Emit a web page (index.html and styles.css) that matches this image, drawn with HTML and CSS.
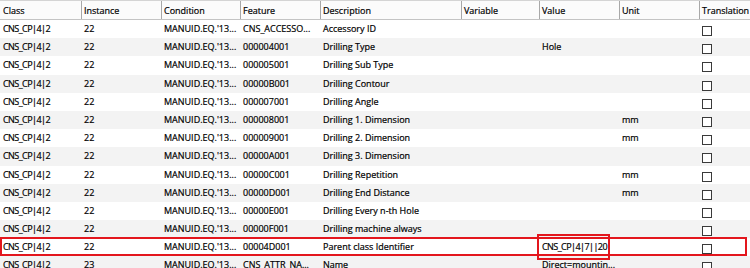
FILE: index.html
```html
<!DOCTYPE html>
<html>
<head>
<meta charset="utf-8">
<link rel="stylesheet" href="styles.css">
</head>
<body>
<div class="grid">
  <div class="row head">
    <div class="cell">Class</div>
    <div class="cell">Instance</div>
    <div class="cell">Condition</div>
    <div class="cell">Feature</div>
    <div class="cell">Description</div>
    <div class="cell">Variable</div>
    <div class="cell">Value</div>
    <div class="cell">Unit</div>
    <div class="cell">Translation</div>
  </div>
  <div class="row">
    <div class="cell code">CNS_CP|4|2</div><div class="cell">22</div><div class="cell">MANUID.EQ.'13...</div><div class="cell">CNS_ACCESSO...</div><div class="cell">Accessory ID</div><div class="cell"></div><div class="cell"></div><div class="cell"></div><div class="cell"><span class="check"></span></div>
  </div>
  <div class="row alt">
    <div class="cell code">CNS_CP|4|2</div><div class="cell">22</div><div class="cell">MANUID.EQ.'13...</div><div class="cell">000004001</div><div class="cell">Drilling Type</div><div class="cell"></div><div class="cell">Hole</div><div class="cell"></div><div class="cell"><span class="check"></span></div>
  </div>
  <div class="row">
    <div class="cell code">CNS_CP|4|2</div><div class="cell">22</div><div class="cell">MANUID.EQ.'13...</div><div class="cell">000005001</div><div class="cell">Drilling Sub Type</div><div class="cell"></div><div class="cell"></div><div class="cell"></div><div class="cell"><span class="check"></span></div>
  </div>
  <div class="row alt">
    <div class="cell code">CNS_CP|4|2</div><div class="cell">22</div><div class="cell">MANUID.EQ.'13...</div><div class="cell">00000B001</div><div class="cell">Drilling Contour</div><div class="cell"></div><div class="cell"></div><div class="cell"></div><div class="cell"><span class="check"></span></div>
  </div>
  <div class="row">
    <div class="cell code">CNS_CP|4|2</div><div class="cell">22</div><div class="cell">MANUID.EQ.'13...</div><div class="cell">000007001</div><div class="cell">Drilling Angle</div><div class="cell"></div><div class="cell"></div><div class="cell"></div><div class="cell"><span class="check"></span></div>
  </div>
  <div class="row alt">
    <div class="cell code">CNS_CP|4|2</div><div class="cell">22</div><div class="cell">MANUID.EQ.'13...</div><div class="cell">000008001</div><div class="cell">Drilling 1. Dimension</div><div class="cell"></div><div class="cell"></div><div class="cell">mm</div><div class="cell"><span class="check"></span></div>
  </div>
  <div class="row">
    <div class="cell code">CNS_CP|4|2</div><div class="cell">22</div><div class="cell">MANUID.EQ.'13...</div><div class="cell">000009001</div><div class="cell">Drilling 2. Dimension</div><div class="cell"></div><div class="cell"></div><div class="cell">mm</div><div class="cell"><span class="check"></span></div>
  </div>
  <div class="row alt">
    <div class="cell code">CNS_CP|4|2</div><div class="cell">22</div><div class="cell">MANUID.EQ.'13...</div><div class="cell">00000A001</div><div class="cell">Drilling 3. Dimension</div><div class="cell"></div><div class="cell"></div><div class="cell"></div><div class="cell"><span class="check"></span></div>
  </div>
  <div class="row">
    <div class="cell code">CNS_CP|4|2</div><div class="cell">22</div><div class="cell">MANUID.EQ.'13...</div><div class="cell">00000C001</div><div class="cell">Drilling Repetition</div><div class="cell"></div><div class="cell"></div><div class="cell">mm</div><div class="cell"><span class="check"></span></div>
  </div>
  <div class="row alt">
    <div class="cell code">CNS_CP|4|2</div><div class="cell">22</div><div class="cell">MANUID.EQ.'13...</div><div class="cell">00000D001</div><div class="cell">Drilling End Distance</div><div class="cell"></div><div class="cell"></div><div class="cell">mm</div><div class="cell"><span class="check"></span></div>
  </div>
  <div class="row">
    <div class="cell code">CNS_CP|4|2</div><div class="cell">22</div><div class="cell">MANUID.EQ.'13...</div><div class="cell">00000E001</div><div class="cell">Drilling Every n-th Hole</div><div class="cell"></div><div class="cell"></div><div class="cell"></div><div class="cell"><span class="check"></span></div>
  </div>
  <div class="row alt">
    <div class="cell code">CNS_CP|4|2</div><div class="cell">22</div><div class="cell">MANUID.EQ.'13...</div><div class="cell">00000F001</div><div class="cell">Drilling machine always</div><div class="cell"></div><div class="cell"></div><div class="cell"></div><div class="cell"><span class="check"></span></div>
  </div>
  <div class="row marked">
    <div class="cell code">CNS_CP|4|2</div><div class="cell">22</div><div class="cell">MANUID.EQ.'13...</div><div class="cell">00004D001</div><div class="cell">Parent class Identifier</div><div class="cell"></div><div class="cell code boxed">CNS_CP|4|7||20</div><div class="cell"></div><div class="cell"><span class="check"></span></div>
  </div>
  <div class="row alt">
    <div class="cell code">CNS_CP|4|2</div><div class="cell">23</div><div class="cell">MANUID.EQ.'13...</div><div class="cell">CNS_ATTR_NA...</div><div class="cell">Name</div><div class="cell"></div><div class="cell">Direct=mountin...</div><div class="cell"></div><div class="cell"><span class="check"></span></div>
  </div>
</div>
</body>
</html>
```

FILE: styles.css
```css
html, body {
  margin: 0;
  padding: 0;
  background: #ffffff;
  overflow: hidden;
}

.grid {
  width: 750px;
  font-family: "Open Sans", "Noto Sans", sans-serif;
  font-size: 9px;
  color: #000;
  -webkit-text-stroke: 0.2px #000;
}

.row {
  display: grid;
  grid-template-columns: 82px 80px 79px 80px 141px 78px 80px 80px 1fr;
  height: 18.2px;
  line-height: 18.2px;
  background: #ffffff;
}

.row.alt {
  background: #f3f3f3;
}

.cell {
  padding-left: 2px;
  white-space: nowrap;
  overflow: hidden;
}

.cell:first-child {
  padding-left: 3px;
}

.code {
  letter-spacing: -0.55px;
}

.head {
  height: 20px;
  line-height: 19px;
  background: #fbfbfb;
  border-top: 1px solid #d4d4d4;
  border-bottom: 1px solid #c4c4c4;
  box-sizing: border-box;
}

.head .cell {
  border-right: 1px solid #a8a8a8;
}

.head .cell:last-child {
  border-right: none;
}

.check {
  display: block;
  width: 8px;
  height: 8px;
  margin-top: 6px;
  border: 1px solid #3a3a3a;
  background: #fff;
}

.marked {
  position: relative;
}

.marked::after {
  content: "";
  position: absolute;
  left: 0;
  right: 3px;
  top: -1px;
  bottom: 0;
  border: 2px solid #e3161d;
  pointer-events: none;
}

.boxed {
  position: relative;
  overflow: visible;
}

.boxed::after {
  content: "";
  position: absolute;
  left: -3px;
  width: 73px;
  top: -4px;
  height: 26px;
  box-sizing: border-box;
  border: 2px solid #e3161d;
}
```
